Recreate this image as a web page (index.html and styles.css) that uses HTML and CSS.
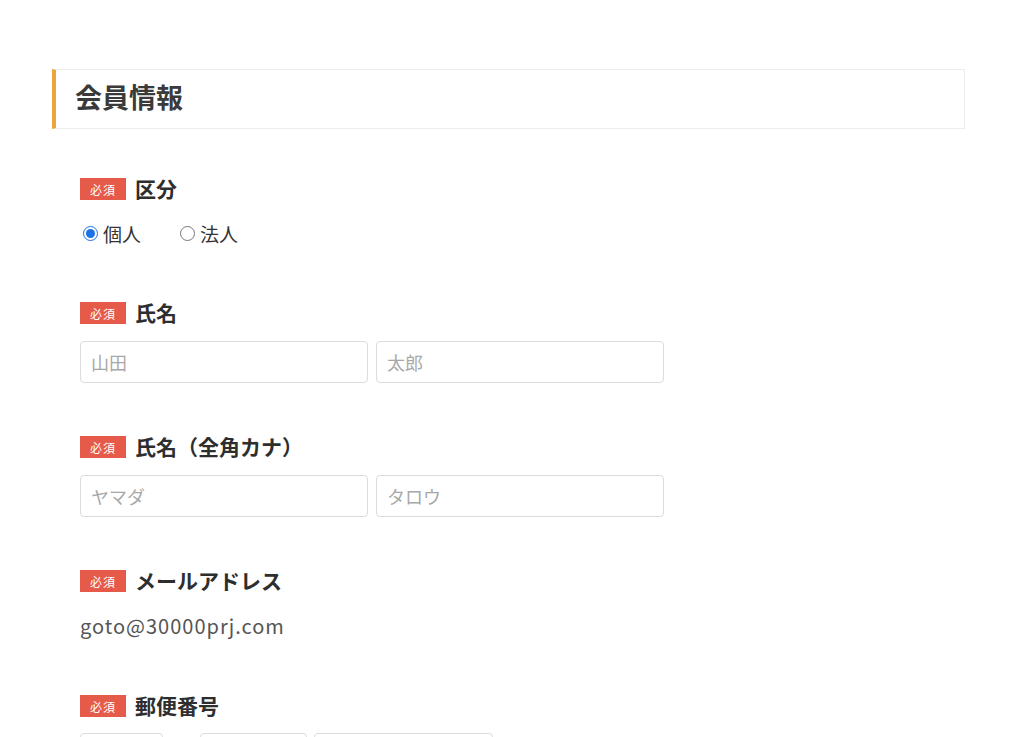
FILE: index.html
```html
<!DOCTYPE html>
<html lang="ja">
<head>
<meta charset="utf-8">
<title>会員情報</title>
<link rel="stylesheet" href="styles.css">
</head>
<body>
<main class="page">
  <h2 class="section-title">会員情報</h2>
  <div class="fields">
    <div class="field">
      <div class="label-row"><span class="badge">必須</span><span class="label">区分</span></div>
      <div class="radios">
        <label class="radio"><input type="radio" name="kubun" checked><span>個人</span></label>
        <label class="radio"><input type="radio" name="kubun"><span>法人</span></label>
      </div>
    </div>
    <div class="field">
      <div class="label-row"><span class="badge">必須</span><span class="label">氏名</span></div>
      <div class="inputs">
        <input class="text" type="text" placeholder="山田">
        <input class="text" type="text" placeholder="太郎">
      </div>
    </div>
    <div class="field">
      <div class="label-row"><span class="badge">必須</span><span class="label">氏名（全角カナ）</span></div>
      <div class="inputs">
        <input class="text" type="text" placeholder="ヤマダ">
        <input class="text" type="text" placeholder="タロウ">
      </div>
    </div>
    <div class="field">
      <div class="label-row"><span class="badge">必須</span><span class="label">メールアドレス</span></div>
      <div class="email">goto@30000prj.com</div>
    </div>
    <div class="field">
      <div class="label-row"><span class="badge">必須</span><span class="label">郵便番号</span></div>
      <div class="inputs zip">
        <input class="text zip1" type="text">
        <input class="text zip2" type="text">
        <input class="text zip3" type="text">
      </div>
    </div>
  </div>
</main>
</body>
</html>
```
FILE: styles.css
```css
html, body {
  margin: 0;
  padding: 0;
  background: #ffffff;
}
body {
  font-family: "Noto Sans CJK JP", "Noto Sans", sans-serif;
  color: #333333;
  overflow: hidden;
}
.page {
  padding: 69px 0 0 52px;
  width: 913px;
}
.section-title {
  margin: 0;
  height: 58px;
  box-sizing: content-box;
  border: 1px solid #ececec;
  border-left: 4px solid #eea43a;
  padding-left: 19px;
  font-size: 27px;
  font-weight: bold;
  line-height: 54px;
  color: #3a3a3a;
}
.fields {
  padding: 48px 0 0 28px;
}
.field {
  margin-bottom: 52px;
}
.label-row {
  display: flex;
  align-items: center;
  height: 24px;
  gap: 9px;
}
.badge {
  display: inline-flex;
  align-items: center;
  justify-content: center;
  width: 46px;
  height: 22px;
  background: #e65a4a;
  color: #ffffff;
  font-size: 12px;
  letter-spacing: 1px;
}
.label {
  font-size: 21px;
  font-weight: bold;
  color: #2e2e2e;
  line-height: 24px;
  padding-bottom: 3px;
}
.radios {
  margin-top: 16px;
  height: 32px;
  display: flex;
  align-items: center;
  gap: 36px;
}
.radio {
  display: flex;
  align-items: center;
  font-size: 19px;
  color: #333;
}
.radio input {
  width: 15px;
  height: 15px;
  margin: 0 5px 0 3px;
  accent-color: #1a73e8;
}
.inputs {
  margin-top: 16px;
  display: flex;
  gap: 8px;
  align-items: center;
}
.text {
  box-sizing: border-box;
  width: 288px;
  height: 42px;
  border: 1px solid #dcdcdc;
  border-radius: 4px;
  padding: 0 10px;
  font-family: "Noto Sans CJK JP", sans-serif;
  font-size: 18px;
  color: #333;
  background: #fff;
  outline: none;
}
.text::placeholder {
  color: #a8a8a8;
}
.zip {
  margin-top: 15px;
  gap: 7px;
}
.zip1 { width: 83px; margin-right: 30px; }
.zip2 { width: 107px; }
.zip3 { width: 179px; }
.email {
  margin-top: 17px;
  height: 32px;
  line-height: 32px;
  font-size: 20px;
  color: #555555;
  letter-spacing: 1px;
}
```
